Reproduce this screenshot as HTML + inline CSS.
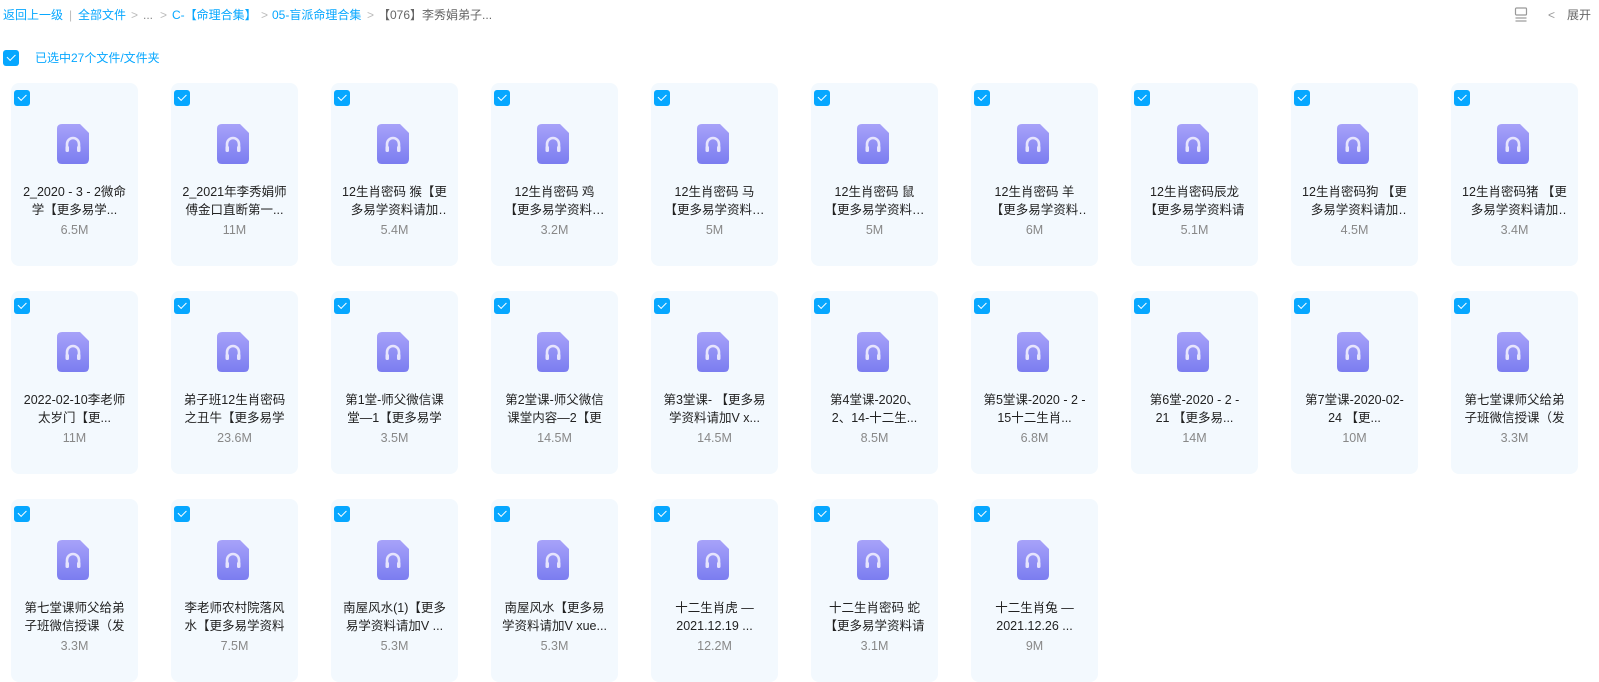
<!DOCTYPE html>
<html><head><meta charset="utf-8"><style>
*{margin:0;padding:0;box-sizing:border-box}
body{width:1599px;height:670px;overflow:hidden;background:#fff;font-family:"Liberation Sans","Noto Sans CJK SC",sans-serif;font-size:12px;color:#333;position:relative}
.a{position:absolute;top:7px;line-height:16px;font-size:12px;color:#06a7ff;white-space:nowrap}
.g{color:#bbb}
.cur{color:#666}
.cb{position:absolute;width:16px;height:16px;border-radius:3px;background:#06a7ff}
.cb:after{content:"";position:absolute;left:4px;top:4px;width:7px;height:3.5px;border-left:1.5px solid #fff;border-bottom:1.5px solid #fff;transform:rotate(-45deg)}
.card{position:absolute;width:127px;height:183px;border-radius:8px;background:#f3f9fe}
.card .cb{left:3px;top:7px}
.ic{position:absolute;left:46px;top:41px;width:32px;height:40px}
.t{position:absolute;top:100px;left:11px;right:11px;text-align:center;line-height:18px;font-size:12.5px;color:#222;height:36px;overflow:hidden;display:-webkit-box;-webkit-line-clamp:2;-webkit-box-orient:vertical}
.s{position:absolute;top:139px;left:0;right:0;text-align:center;color:#888;font-size:12.5px;line-height:16px}
</style></head><body>
<div class="a" style="left:3px">返回上一级</div>
<div class="a g" style="left:69px">|</div>
<div class="a" style="left:78px">全部文件</div>
<div class="a g" style="left:131px">&gt;</div>
<div class="a" style="left:143px;color:#888">...</div>
<div class="a g" style="left:160px">&gt;</div>
<div class="a" style="left:172px">C-【命理合集】</div>
<div class="a g" style="left:261px">&gt;</div>
<div class="a" style="left:272px">05-盲派命理合集</div>
<div class="a g" style="left:367px">&gt;</div>
<div class="a cur" style="left:378px">【076】李秀娟弟子...</div>
<svg style="position:absolute;left:1514px;top:7px" width="14" height="15" viewBox="0 0 14 15" fill="none" stroke="#999" stroke-width="1.2"><rect x="1.5" y="1" width="11" height="7" rx="1"/><line x1="1.5" y1="11" x2="12.5" y2="11"/><line x1="1.5" y1="14" x2="12.5" y2="14"/></svg>
<div class="a" style="left:1548px;color:#999">&lt;</div>
<div class="a" style="left:1567px;color:#666">展开</div>
<div class="cb" style="left:3px;top:50px"></div>
<div class="a" style="left:35px;top:50px">已选中27个文件/文件夹</div>
<svg width="0" height="0" style="position:absolute"><defs><linearGradient id="gr" x1="0" y1="0" x2="0" y2="1"><stop offset="0" stop-color="#a7a2f9"/><stop offset="1" stop-color="#7b7df0"/></linearGradient></defs></svg>
<div id="c"></div>
<script>
var d=[["2_2020 - 3 - 2微命学【更多易学...","6.5M"],["2_2021年李秀娟师傅金口直断第一...","11M"],["12生肖密码 猴【更多易学资料请加V...","5.4M"],["12生肖密码 鸡 【更多易学资料请加...","3.2M"],["12生肖密码 马 【更多易学资料请加...","5M"],["12生肖密码 鼠 【更多易学资料请加...","5M"],["12生肖密码 羊 【更多易学资料请...","6M"],["12生肖密码辰龙【更多易学资料请","5.1M"],["12生肖密码狗 【更多易学资料请加V...","4.5M"],["12生肖密码猪 【更多易学资料请加V...","3.4M"],
["2022-02-10李老师太岁门【更...","11M"],["弟子班12生肖密码之丑牛【更多易学","23.6M"],["第1堂-师父微信课堂—1【更多易学","3.5M"],["第2堂课-师父微信课堂内容—2【更","14.5M"],["第3堂课- 【更多易学资料请加V x...","14.5M"],["第4堂课-2020、2、14-十二生...","8.5M"],["第5堂课-2020 - 2 - 15十二生肖...","6.8M"],["第6堂-2020 - 2 - 21 【更多易...","14M"],["第7堂课-2020-02-24 【更...","10M"],["第七堂课师父给弟子班微信授课（发","3.3M"],
["第七堂课师父给弟子班微信授课（发","3.3M"],["李老师农村院落风水【更多易学资料","7.5M"],["南屋风水(1)【更多易学资料请加V ...","5.3M"],["南屋风水【更多易学资料请加V xue...","5.3M"],["十二生肖虎 —2021.12.19 ...","12.2M"],["十二生肖密码 蛇 【更多易学资料请","3.1M"],["十二生肖兔 —2021.12.26 ...","9M"]];
var h="";
var ic='<svg class="ic" viewBox="0 0 32 40"><path d="M5 0H23L32 9V35Q32 40 27 40H5Q0 40 0 35V5Q0 0 5 0Z" fill="url(#gr)"/><path d="M10 25V20A6 6 0 0 1 22 20V25" fill="none" stroke="#e6e4fd" stroke-width="2.6"/><rect x="8.5" y="22" width="3.5" height="6" rx="1.5" fill="#e6e4fd"/><rect x="20" y="22" width="3.5" height="6" rx="1.5" fill="#e6e4fd"/></svg>';
d.forEach(function(x,i){var r=Math.floor(i/10),c=i%10;h+='<div class="card" style="left:'+(11+c*160)+'px;top:'+(83+r*208)+'px"><div class="cb"></div>'+ic+'<div class="t">'+x[0]+'</div><div class="s">'+x[1]+'</div></div>';});
document.getElementById("c").innerHTML=h;
</script>
</body></html>
